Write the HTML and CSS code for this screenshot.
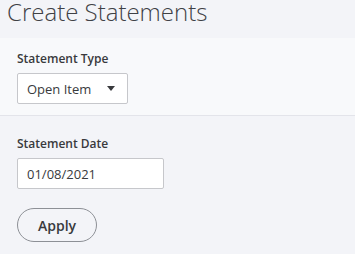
FILE: index.html
```html
<!DOCTYPE html>
<html>
<head>
<meta charset="utf-8">
<link rel="stylesheet" href="styles.css">
</head>
<body>
<header class="head">
  <h1 class="title">Create Statements</h1>
</header>
<section class="panel">
  <label class="label">Statement Type</label>
  <div class="select">
    <span>Open Item</span>
    <svg class="caret" width="8" height="5" viewBox="0 0 8 5"><path d="M0 0h8L4 5z" fill="#393a3d"/></svg>
  </div>
</section>
<section class="body">
  <label class="label">Statement Date</label>
  <div class="input">01/08/2021</div>
  <button class="apply">Apply</button>
</section>
</body>
</html>
```
FILE: styles.css
```css
html, body {
  margin: 0;
  padding: 0;
  background: #f3f4f8;
  font-family: "Open Sans", "Liberation Sans", sans-serif;
  color: #393a3d;
  width: 355px;
  height: 254px;
  overflow: hidden;
}
.head {
  height: 38px;
  background: #f3f4f8;
}
.title {
  margin: 0;
  padding: 0 0 0 7px;
  font-weight: 300;
  font-size: 24px;
  line-height: 24px;
  color: #3f4146;
}
.panel {
  background: #f8f9fb;
  border-bottom: 1px solid #e3e4ea;
  padding: 13px 0 0 17px;
  box-sizing: border-box;
  height: 78px;
  display: flex;
  flex-direction: column;
  align-items: flex-start;
}
.label {
  font-size: 12px;
  font-weight: 600;
  line-height: 16px;
  color: #393a3d;
}
.select {
  margin-top: 6px;
  width: 111px;
  height: 31px;
  box-sizing: border-box;
  background: #fff;
  border: 1px solid #c6c7cb;
  border-radius: 2px;
  display: flex;
  align-items: center;
  justify-content: space-between;
  padding: 0 12px 0 9px;
  font-size: 13px;
  color: #393a3d;
}
.caret { display: block; }
.body {
  padding: 20px 0 0 17px;
  display: flex;
  flex-direction: column;
  align-items: flex-start;
}
.input {
  margin-top: 6px;
  width: 147px;
  height: 31px;
  box-sizing: border-box;
  background: #fff;
  border: 1px solid #c6c7cb;
  border-radius: 2px;
  padding: 0 9px;
  display: flex;
  align-items: center;
  font-size: 13px;
  color: #393a3d;
}
.apply {
  margin-top: 19px;
  width: 80px;
  height: 34px;
  border: 1px solid #8d9096;
  border-radius: 17px;
  background: transparent;
  font-family: "Open Sans", "Liberation Sans", sans-serif;
  font-size: 14px;
  font-weight: 600;
  color: #393a3d;
  padding: 0;
}
```
